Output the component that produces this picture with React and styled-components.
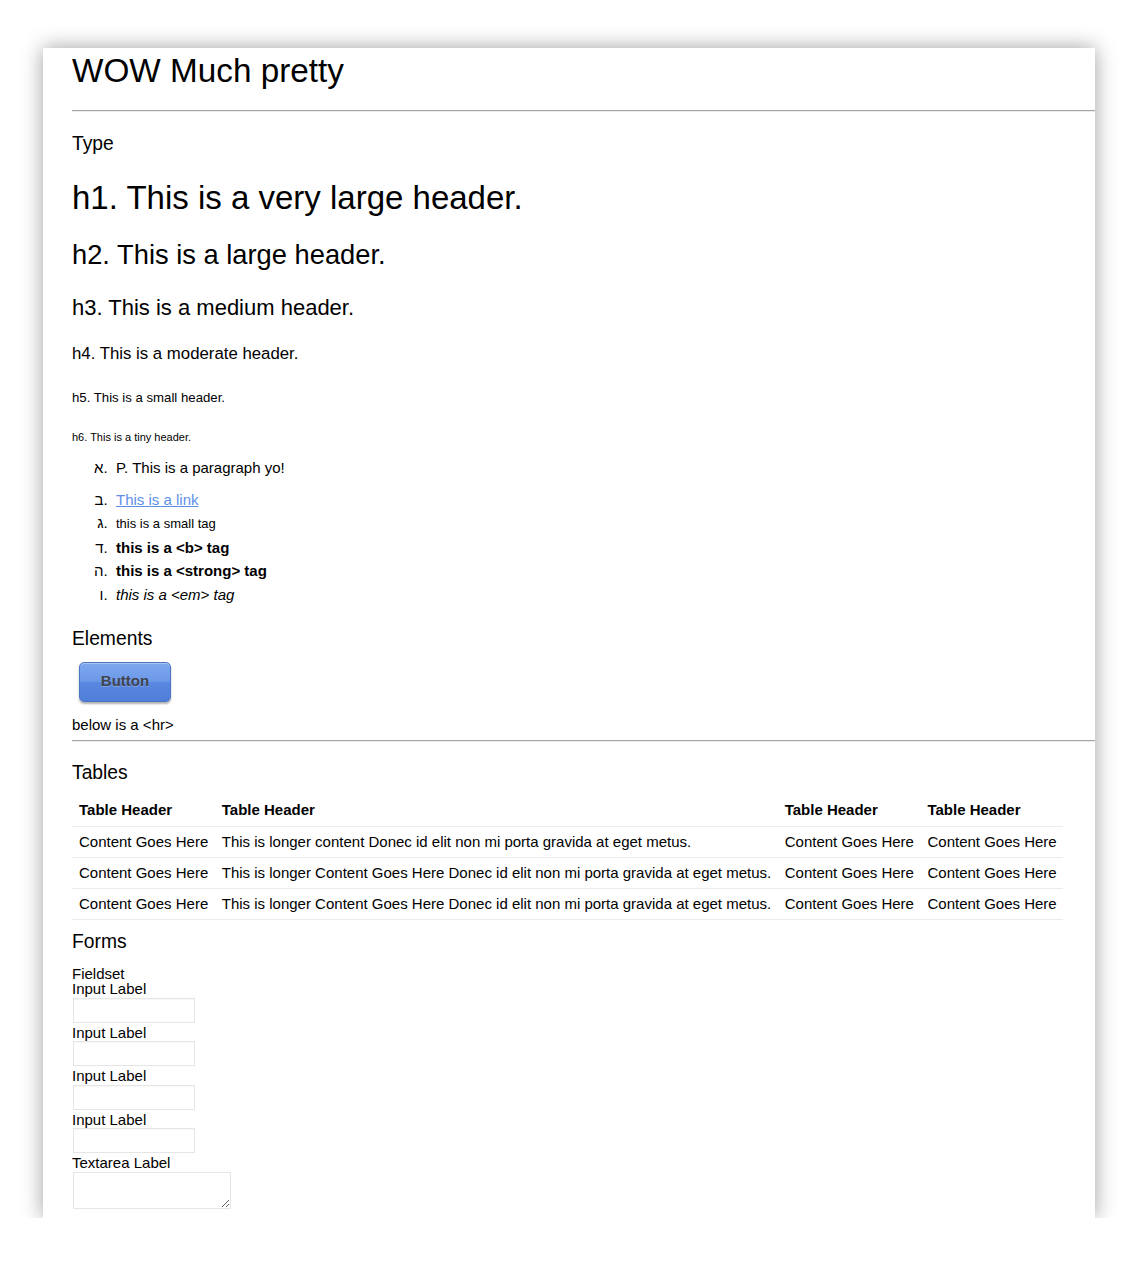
import React from "react";
import styled, { createGlobalStyle } from "styled-components";

const GlobalStyle = createGlobalStyle`
  body {
    margin: 0;
    background: #ffffff;
    color: #000;
    font-family: "Liberation Sans", Arial, "DejaVu Sans", sans-serif;
    font-size: 15px;
  }
`;

const Sheet = styled.div`
  box-sizing: border-box;
  width: 1052px;
  margin: 48px 0 0 43px;
  padding: 3px 0 9px 29px;
  background: #fff;
  box-shadow: 0 0 20px rgba(0, 0, 0, 0.38);
`;

const Title = styled.h1`
  margin: 0;
  font-size: 33.3px;
  line-height: 40px;
  font-weight: normal;
`;

const Rule = styled.hr`
  margin: ${(p) => p.$mt}px 0 0 0;
  border: 0;
  border-top: 1px solid #a4a4a4;
  border-bottom: 1px solid #ececec;
  height: 0;
`;

const SectionTitle = styled.h2`
  margin: ${(p) => p.$mt}px 0 0 0;
  font-size: 19.3px;
  line-height: 24px;
  font-weight: normal;
`;

const Heading = styled.div`
  margin-top: ${(p) => p.$mt}px;
  font-size: ${(p) => p.$size}px;
  line-height: ${(p) => p.$lh}px;
`;

const List = styled.ol`
  margin: 12px 0 0 0;
  padding-left: 44px;
`;

const Item = styled.li`
  line-height: 23.5px;
  margin-bottom: ${(p) => p.$after || 0}px;
  &::marker {
    content: counter(list-item, hebrew) ".\\00a0\\00a0";
    font-size: 15px;
    font-weight: normal;
    font-style: normal;
  }
`;

const Link = styled.a`
  color: #5d8fe8;
  text-decoration: underline;
`;

const Small = styled.small`
  font-size: 13px;
`;

const Button = styled.button`
  display: block;
  box-sizing: border-box;
  width: 92px;
  height: 40px;
  margin: 11px 0 0 7px;
  padding: 0 0 4px;
  border: 1px solid #4b74c2;
  border-radius: 5px;
  background: linear-gradient(#7ea8ef 0%, #6c98e8 48%, #5a88e0 52%, #4f7ed8 100%);
  box-shadow: 0 2px 2px rgba(0, 0, 0, 0.3), inset 0 1px 0 rgba(255, 255, 255, 0.35);
  color: #40444c;
  font-family: inherit;
  font-size: 15px;
  font-weight: bold;
  text-shadow: 0 1px 0 rgba(255, 255, 255, 0.25);
  cursor: pointer;
`;

const Note = styled.p`
  margin: 13px 0 0 0;
  line-height: 20px;
`;

const Table = styled.table`
  margin-top: 10px;
  border-collapse: collapse;
  font-size: 15px;
`;

const Row = styled.tr`
  border-bottom: 1px solid #ebebeb;
`;

const HeadCell = styled.th`
  padding: 5px 6.5px 6px 7px;
  line-height: 20px;
  text-align: left;
  font-weight: bold;
  white-space: nowrap;
`;

const Cell = styled.td`
  padding: 5px 6.5px 5px 7px;
  line-height: 20px;
  white-space: nowrap;
`;

const Fieldset = styled.fieldset`
  margin: 12px 0 0 0;
  padding: 0;
  border: 0;
`;

const Legend = styled.div`
  line-height: 15px;
`;

const FieldLabel = styled.label`
  display: block;
  line-height: 15px;
`;

const TextInput = styled.input`
  display: block;
  box-sizing: border-box;
  width: 122px;
  height: 25px;
  margin: 1.5px 0 2px 1px;
  border: 1px solid #e6e6e6;
  box-shadow: inset 0 1px 1px rgba(0, 0, 0, 0.03);
  outline: none;
`;

const TextArea = styled.textarea`
  display: block;
  box-sizing: border-box;
  width: 158px;
  height: 37px;
  margin: 1.5px 0 0 1px;
  border: 1px solid #e6e6e6;
  outline: none;
`;

const headings = [
  { text: "h1. This is a very large header.", size: 33, lh: 38, mt: 23 },
  { text: "h2. This is a large header.", size: 27.3, lh: 32, mt: 22 },
  { text: "h3. This is a medium header.", size: 22, lh: 26, mt: 24 },
  { text: "h4. This is a moderate header.", size: 16.8, lh: 20, mt: 23 },
  { text: "h5. This is a small header.", size: 13.2, lh: 16, mt: 26 },
  { text: "h6. This is a tiny header.", size: 11, lh: 14, mt: 24 },
];

const longText = "This is longer Content Goes Here Donec id elit non mi porta gravida at eget metus.";
const rows = [
  ["Content Goes Here", "This is longer content Donec id elit non mi porta gravida at eget metus.", "Content Goes Here", "Content Goes Here"],
  ["Content Goes Here", longText, "Content Goes Here", "Content Goes Here"],
  ["Content Goes Here", longText, "Content Goes Here", "Content Goes Here"],
];

const App = () => {
  return (
    <>
      <GlobalStyle />
      <Sheet>
        <Title>WOW Much pretty</Title>
        <Rule $mt={19} />

        <SectionTitle $mt={20}>Type</SectionTitle>
        {headings.map((h) => (
          <Heading key={h.text} $size={h.size} $lh={h.lh} $mt={h.mt}>
            {h.text}
          </Heading>
        ))}
        <List>
          <Item $after={8}>P. This is a paragraph yo!</Item>
          <Item>
            <Link href="#">This is a link</Link>
          </Item>
          <Item>
            <Small>this is a small tag</Small>
          </Item>
          <Item>
            <b>this is a &lt;b&gt; tag</b>
          </Item>
          <Item>
            <strong>this is a &lt;strong&gt; tag</strong>
          </Item>
          <Item>
            <em>this is a &lt;em&gt; tag</em>
          </Item>
        </List>

        <SectionTitle $mt={21}>Elements</SectionTitle>
        <Button>Button</Button>
        <Note>below is a &lt;hr&gt;</Note>
        <Rule $mt={5} />

        <SectionTitle $mt={19}>Tables</SectionTitle>
        <Table>
          <thead>
            <Row>
              <HeadCell>Table Header</HeadCell>
              <HeadCell>Table Header</HeadCell>
              <HeadCell>Table Header</HeadCell>
              <HeadCell>Table Header</HeadCell>
            </Row>
          </thead>
          <tbody>
            {rows.map((r, i) => (
              <Row key={i}>
                {r.map((c, j) => (
                  <Cell key={j}>{c}</Cell>
                ))}
              </Row>
            ))}
          </tbody>
        </Table>

        <SectionTitle $mt={10}>Forms</SectionTitle>
        <Fieldset>
          <Legend>Fieldset</Legend>
          <FieldLabel>Input Label</FieldLabel>
          <TextInput type="text" />
          <FieldLabel>Input Label</FieldLabel>
          <TextInput type="text" />
          <FieldLabel>Input Label</FieldLabel>
          <TextInput type="text" />
          <FieldLabel>Input Label</FieldLabel>
          <TextInput type="text" />
          <FieldLabel>Textarea Label</FieldLabel>
          <TextArea />
        </Fieldset>
      </Sheet>
    </>
  );
};

export default App;
